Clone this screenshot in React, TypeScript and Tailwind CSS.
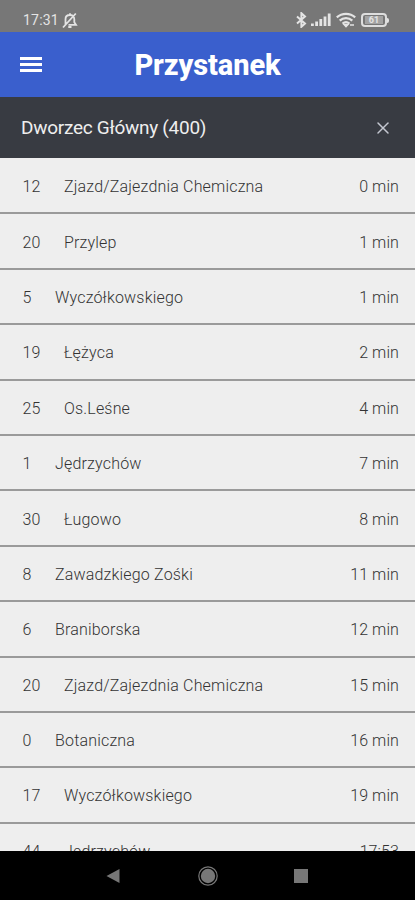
import React from 'react';
import { X } from 'lucide-react';

interface Departure {
  line: string;
  direction: string;
  time: string;
}

const departures: Departure[] = [
  { line: '12', direction: 'Zjazd/Zajezdnia Chemiczna', time: '0 min' },
  { line: '20', direction: 'Przylep', time: '1 min' },
  { line: '5', direction: 'Wyczółkowskiego', time: '1 min' },
  { line: '19', direction: 'Łężyca', time: '2 min' },
  { line: '25', direction: 'Os.Leśne', time: '4 min' },
  { line: '1', direction: 'Jędrzychów', time: '7 min' },
  { line: '30', direction: 'Ługowo', time: '8 min' },
  { line: '8', direction: 'Zawadzkiego Zośki', time: '11 min' },
  { line: '6', direction: 'Braniborska', time: '12 min' },
  { line: '20', direction: 'Zjazd/Zajezdnia Chemiczna', time: '15 min' },
  { line: '0', direction: 'Botaniczna', time: '16 min' },
  { line: '17', direction: 'Wyczółkowskiego', time: '19 min' },
  { line: '44', direction: 'Jędrzychów', time: '17:53' },
];

const StatusBar: React.FC = () => (
  <div className="flex h-8 shrink-0 items-center bg-[#777777] pt-2 pr-[26px] pl-[23px] text-[#e4e4e4]">
    <span className="text-[14px] leading-6 tracking-[0.2px]">17:31</span>
    {/* muted bell */}
    <svg className="ml-[3px] h-[17px] w-4" viewBox="0 0 16 17" fill="none" stroke="currentColor" strokeWidth="1.8">
      <path d="M3.5 12.5V7.2C3.5 4.6 5.4 3 8 3s4.3 1.6 4.3 4.2v3l1.7 2.6H6.5M8 3V1.3M6.3 15h3.2M1 15.5 13.8 1.5" />
    </svg>
    <div className="ml-auto flex items-center">
      <svg className="h-4 w-[11px]" viewBox="0 0 11 16" fill="none" stroke="currentColor" strokeWidth="2">
        <path d="m1 4.5 8 7-3.6 3.3V1.2L9 4.5l-8 7" />
      </svg>
      <svg className="ml-1 h-[14px] w-5" viewBox="0 0 20 14" fill="currentColor">
        <path d="M0 10.5h2.8V13H0zM4.2 8.5H7V13H4.2zM8.4 6h2.8v7H8.4zM12.6 3.5h2.8V13h-2.8zM16.8.5h2.8V13h-2.8z" />
      </svg>
      <svg className="ml-[5px] h-4 w-5" viewBox="0 0 20 16" fill="none" stroke="currentColor" strokeWidth="2.2">
        <path d="M.8 5.4c5.2-4.8 13.2-4.8 18.4 0M3.7 8.6c3.6-3.3 9-3.3 12.6 0M6.6 11.6c2-1.8 4.8-1.8 6.8 0" />
        <path d="m7.8 12.4 2.2 2.4 2.2-2.4zM14 13h4" fill="currentColor" strokeWidth="1.4" />
      </svg>
      <div className="ml-[5px] flex h-[14px] w-[26px] items-center justify-center rounded-[4px] border-2 border-[#dedede]">
        <span className="flex h-2 w-[18px] items-center justify-center bg-[#a3a3a3] text-[9px] leading-none font-bold">61</span>
      </div>
      <span className="h-[5px] w-[2px] rounded-r-full bg-[#e4e4e4]" />
    </div>
  </div>
);

const NavigationBar: React.FC = () => (
  <div className="grid h-[49px] shrink-0 grid-cols-[113px_93px_93px_1fr] items-center bg-black text-[#777777]">
    <svg className="col-start-2 -ml-[7px] h-4 w-[14px]" viewBox="0 0 14 16" fill="currentColor">
      <path d="M13.5 1v14L.5 8z" />
    </svg>
    <svg className="-ml-2 size-5" viewBox="0 0 20 20" fill="currentColor">
      <circle cx="10" cy="10" r="7.2" />
      <circle cx="10" cy="10" r="9.2" fill="none" stroke="currentColor" strokeWidth="1.2" />
    </svg>
    <span className="-ml-[5px] size-[14px] bg-[#777777]" />
  </div>
);

export default function App() {
  return (
    <div className="flex h-[900px] w-[415px] flex-col overflow-hidden bg-[#eeeeee] font-['Roboto','Noto_Sans',sans-serif]">
      <StatusBar />
      <header className="grid h-[65px] shrink-0 grid-cols-[64px_1fr_64px] items-center bg-[#3a5fcd] text-white">
        <button type="button" aria-label="Menu" className="mr-[22px] flex w-[22px] flex-col gap-[3px] justify-self-end">
          <span className="h-[3px] bg-white" />
          <span className="h-[3px] bg-white" />
          <span className="h-[3px] bg-white" />
        </button>
        <h1 className="pt-[3px] text-center text-[29px] font-extrabold tracking-[-0.1px]">Przystanek</h1>
      </header>
      <div className="flex h-[61px] shrink-0 items-center justify-between bg-[#383b42] pr-[22px] pl-[21px]">
        <h2 className="pt-px text-[19px] tracking-[-0.27px] text-[#eeeeee]">Dworzec Główny (400)</h2>
        <button type="button" aria-label="Zamknij" className="text-[#c4c7d0]">
          <X size={20} strokeWidth={1.8} />
        </button>
      </div>
      <ul className="min-h-0 flex-1 overflow-hidden pt-px">
        {departures.map((departure, index) => (
          <li
            key={index}
            className="flex h-[55.4px] items-center border-b-2 border-[#9a9a9a] pt-[3px] pr-4 pl-[22.5px] text-[16px] font-light text-[#333333]"
          >
            <span className="tracking-[0.1px]">{departure.line}</span>
            <span className="ml-[23.5px] tracking-[0.18px]">{departure.direction}</span>
            <span className="ml-auto tracking-[0.1px]">{departure.time}</span>
          </li>
        ))}
      </ul>
      <NavigationBar />
    </div>
  );
}
